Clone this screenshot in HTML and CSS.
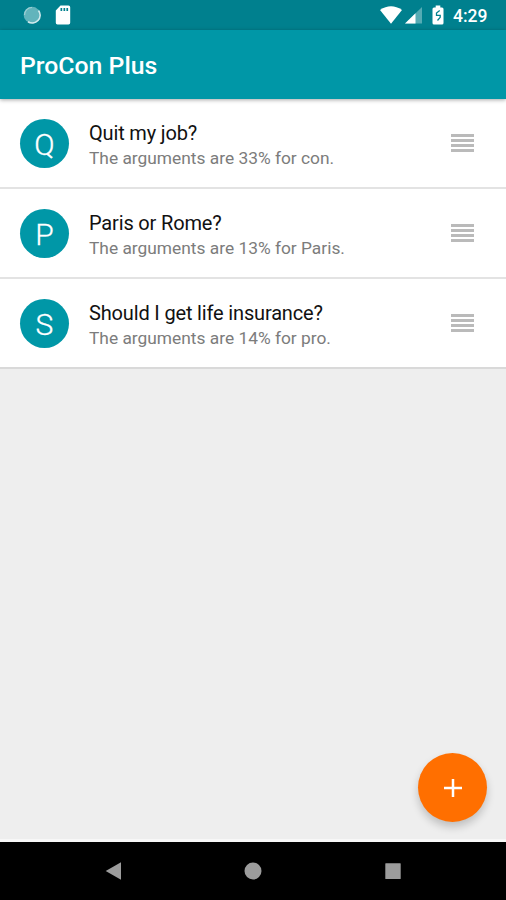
FILE: index.html
```html
<!DOCTYPE html>
<html lang="en">
<head>
<meta charset="utf-8">
<title>ProCon Plus</title>
<link rel="stylesheet" href="styles.css">
</head>
<body>
<div class="screen">
  <div class="status">
    <svg class="spinner" width="18" height="18" viewBox="0 0 18 18"><circle cx="9" cy="9" r="8.300" fill="#62b4bc"/><path d="M1.500 9A7.500 7.500 0 0 1 9 1.500" fill="none" stroke="#9fd0d5" stroke-width="1.200"/><path d="M15.500 4.500A7.800 7.800 0 0 1 5 15.700" fill="none" stroke="#d2eaed" stroke-width="1.700"/></svg>
    <svg class="sdcard" width="16" height="20" viewBox="0 0 16 20"><path fill="#fff" fill-rule="evenodd" d="M5.500.5h8q1.700 0 1.700 1.700v15.600q0 1.700-1.700 1.700h-11q-1.700 0-1.700-1.700V5.500zM5.500 3v3h1.700V3zM8.500 3v3h1.700V3zM11.400 3v3h1.700V3z"/></svg>
    <span class="grow"></span>
    <svg class="wifi" width="22" height="18" viewBox="0 0 22 18"><path fill="#fff" d="M0 4Q11-3.500 22 4L11 17.800z"/></svg>
    <svg class="signal" width="17" height="18" viewBox="0 0 17 18"><path fill="#55abb4" d="M17 1v16.500H0z"/><path fill="#fff" d="M10.500 7.300v10.200H0z"/></svg>
    <svg class="battery" width="12" height="20" viewBox="0 0 12 20"><path fill="#fff" d="M3.700.5h4.600v2h1.700q1.500 0 1.500 1.500v14q0 1.500-1.500 1.500H2Q.5 19.500.5 18V4Q.5 2.500 2 2.500h1.700z"/><path fill="none" stroke="#00808e" stroke-width="1.300" d="M7.700 5.500L4.500 8v2.300h3.700v2L5.500 15.500"/></svg>
    <span class="clock">4:29</span>
  </div>
  <header class="appbar"><h1>ProCon Plus</h1></header>
  <main class="content">
    <ul class="list">
      <li class="row">
        <span class="avatar">Q</span>
        <div class="text"><div class="name">Quit my job?</div><div class="detail">The arguments are 33% for con.</div></div>
        <span class="handle"><i></i><i></i><i></i><i></i></span>
      </li>
      <li class="row">
        <span class="avatar">P</span>
        <div class="text"><div class="name">Paris or Rome?</div><div class="detail">The arguments are 13% for Paris.</div></div>
        <span class="handle"><i></i><i></i><i></i><i></i></span>
      </li>
      <li class="row">
        <span class="avatar">S</span>
        <div class="text"><div class="name">Should I get life insurance?</div><div class="detail">The arguments are 14% for pro.</div></div>
        <span class="handle"><i></i><i></i><i></i><i></i></span>
      </li>
    </ul>
    <button class="fab" aria-label="Add"><svg width="18" height="18" viewBox="0 0 18 18"><path d="M9 0v18M0 9h18" stroke="#fff" stroke-width="2.500"/></svg></button>
  </main>
  <nav class="nav">
    <svg width="18" height="18" viewBox="0 0 18 18"><path fill="#9c9c9c" d="M17 .3v17.400L1.700 9z"/></svg>
    <svg width="18" height="18" viewBox="0 0 18 18"><circle cx="9" cy="9" r="8.500" fill="#9c9c9c"/></svg>
    <svg width="18" height="18" viewBox="0 0 18 18"><rect x="1.300" y="1.300" width="15.400" height="15.600" rx=".5" fill="#9c9c9c"/></svg>
  </nav>
</div>
</body>
</html>
```

FILE: styles.css
```css
* { box-sizing: border-box; }
body { margin: 0; font-family: Roboto, sans-serif; }
.screen { display: flex; flex-direction: column; width: 506px; height: 900px; background: #eee; overflow: hidden; }
.status { display: flex; align-items: center; height: 30px; padding: 0 19px 0 23px; background: #00808e; color: #fff; }
.sdcard { margin-left: 14px; }
.grow { flex: 1; }
.wifi { margin-right: 1px; }
.signal { margin-left: 2px; margin-right: 10px; }
.battery { margin-right: 9px; }
.clock { width: 34px; font-size: 17.5px; font-weight: 500; line-height: 30px; white-space: nowrap; padding-top: 2px; }
.appbar { position: relative; z-index: 1; display: flex; align-items: center; height: 69px; padding: 3px 20px 0; background: #0097a7; color: #fff; box-shadow: 0 1px 4px rgba(0, 0, 0, .35); }
.appbar h1 { margin: 0; font-size: 24.8px; font-weight: 500; line-height: 32px; white-space: nowrap; }
.content { position: relative; flex: 1; border-bottom: 3px solid #f7f7f7; }
.list { margin: 0; padding: 0; list-style: none; }
.row { display: flex; align-items: center; height: 90px; padding: 0 32px 0 20px; background: #fff; border-bottom: 2px solid #e3e3e3; }
.row:last-child { border-bottom-color: #d9d9d9; }
.avatar { width: 49px; height: 49px; border-radius: 50%; background: #0097a7; color: #fff; font-size: 30px; font-weight: 300; -webkit-text-stroke: .3px #fff; line-height: 51px; text-align: center; }
.text { flex: 1; margin-left: 20px; padding-top: 4px; white-space: nowrap; }
.name { font-size: 20px; letter-spacing: -.16px; line-height: 26px; color: #111; }
.detail { font-size: 17.35px; line-height: 24px; color: #7c7c7c; }
.handle { display: flex; flex-direction: column; gap: 2px; width: 23px; }
.handle i { height: 3px; background: #bababa; }
.fab { position: absolute; right: 19px; bottom: 17px; display: flex; align-items: center; justify-content: center; width: 69px; height: 69px; padding: 0; border: 0; border-radius: 50%; background: #ff6f00; box-shadow: 0 5px 8px rgba(0, 0, 0, .2); }
.nav { display: flex; align-items: center; justify-content: space-between; height: 58px; padding: 0 104px; background: #000; }
```
